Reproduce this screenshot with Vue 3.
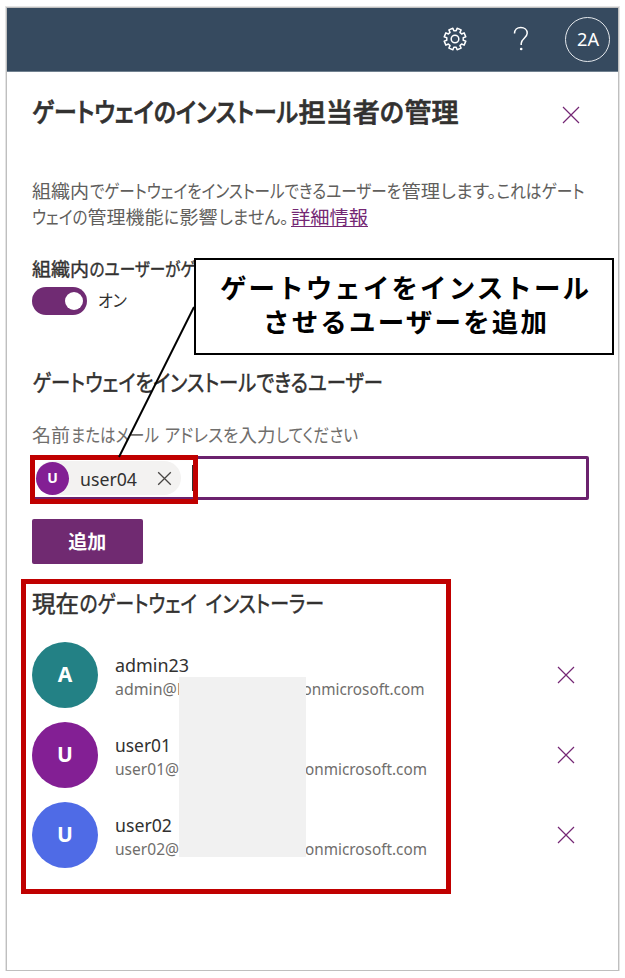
<script setup>
import { h } from 'vue'

// One line of text; each run is [text, x, width] with proportional kana fitted to its width.
const Line = (props) =>
  h('svg', { class: 'line', width: props.w, height: props.h }, props.runs.map(([t, x, w]) =>
    h('text', { x, y: props.y, textLength: w, lengthAdjust: props.fit || 'spacingAndGlyphs' }, t)
  ))
Line.props = ['w', 'h', 'y', 'runs', 'fit']

const title = [['ゲートウェイのインストール', 0, 266], ['担当者', 266.5, 81.5], ['の', 348, 24], ['管理', 372.5, 54]]
const body1 = [['組織内', 0, 57], ['でゲートウェイをインストールできるユーザーを', 58, 311], ['管理', 369.5, 38.5], ['します。', 408.5, 56], ['これはゲート', 464.5, 88]]
const body2 = [['ウェイの', 0, 55.5], ['管理機能', 55.5, 76], ['に', 132, 15], ['影響', 147.5, 38], ['しません。', 186.5, 70]]
const link = [['詳細情報', 0, 77]]
const label = [['組織内', 0, 57], ['のユーザーがゲ', 57.5, 106]]
const usersHeading = [['ゲートウェイをインストールできるユーザー', 0.5, 350.5]]
const hint = [['名前', 0, 38], ['またはメール', 39, 88], ['アドレスを', 132.5, 74], ['入力', 206.5, 37], ['してください', 244, 82]]
const listHeading = [['現在', 0, 47], ['のゲートウェイ', 47.5, 117.5], ['インストーラー', 173.5, 118.5]]

const installers = [
  { initial: 'A', tone: 'teal', name: [['admin23', 0, 74]], mail: [['admin@l', 0, 66], ['onmicrosoft.com', 187.5, 122]] },
  { initial: 'U', tone: 'purple', name: [['user01', 0, 56]], mail: [['user01@', 0, 64], ['onmicrosoft.com', 190, 122]] },
  { initial: 'U', tone: 'blue', name: [['user02', 0, 57]], mail: [['user02@', 0, 64], ['onmicrosoft.com', 190, 122]] }
]

const gear = (() => {
  const pts = []
  for (let i = 0; i < 8; i++) {
    const a = ((i + 0.5) * Math.PI) / 4
    for (const [d, r] of [[-0.25, 8.3], [-0.2, 11], [0.2, 11], [0.25, 8.3]]) {
      pts.push(`${(12 + r * Math.sin(a + d)).toFixed(2)} ${(12 - r * Math.cos(a + d)).toFixed(2)}`)
    }
  }
  return 'M' + pts.join('L') + 'Z'
})()
</script>

<template>
  <div class="frame">
    <header class="bar">
      <svg class="gear" width="24" height="24" viewBox="0 0 24 24">
        <path :d="gear" />
        <circle cx="12" cy="12" r="3.8" />
      </svg>
      <svg class="help" width="16" height="26" viewBox="0 0 16 26">
        <path d="M1.5 7.6C1.5 3.8 4.2 1.6 7.8 1.6S14.2 3.8 14.2 7.2C14.2 11.8 8.2 12.6 8.2 17.4V19" />
        <circle cx="8.2" cy="23" r="1.3" />
      </svg>
      <div class="account"><Line w="22" h="20" y="16.5" :runs="[['2A', 0, 22]]" /></div>
    </header>

    <main class="panel">
      <div class="title-row">
        <Line class="title" w="430" h="34" y="25.5" :runs="title" />
        <svg class="cross close" width="18" height="18" viewBox="0 0 18 18"><path d="M1 1L17 17M17 1L1 17" /></svg>
      </div>

      <div class="description">
        <Line w="552" h="26" y="20" :runs="body1" />
        <div class="body-row">
          <Line w="258.5" h="26" y="20" :runs="body2" />
          <a class="more"><Line w="77" h="22" y="20" :runs="link" /></a>
        </div>
      </div>

      <Line class="label" w="164" h="26" y="20" :runs="label" />
      <div class="toggle-row">
        <span class="toggle"><span class="knob"></span></span>
        <Line class="on" w="32" h="28" y="20" :runs="[['オン', 0, 29]]" />
      </div>

      <Line class="heading users" w="360" h="28" y="21" :runs="usersHeading" />
      <Line class="hint" w="330" h="26" y="20" :runs="hint" />

      <div class="picker">
        <div class="chip">
          <span class="mini">U</span>
          <Line class="chip-name" w="58" h="33" y="24" :runs="[['user04', 0, 57]]" />
          <svg class="cross dark" width="15" height="15" viewBox="0 0 15 15"><path d="M1.2 1.2L13.8 13.8M13.8 1.2L1.2 13.8" /></svg>
        </div>
        <span class="caret"></span>
        <div class="mark mark-input"></div>
      </div>

      <button class="add">追加</button>

      <section class="installers">
        <Line class="heading" w="300" h="28" y="21" :runs="listHeading" />
        <ul class="list">
          <li v-for="(p, i) in installers" :key="i" class="person">
            <span class="avatar" :class="p.tone">{{ p.initial }}</span>
            <div class="who">
              <Line class="name" w="90" h="26" y="20" :runs="p.name" />
              <Line class="mail" w="320" h="22" y="16.5" :runs="p.mail" />
            </div>
            <svg class="cross" width="18" height="18" viewBox="0 0 18 18"><path d="M1 1L17 17M17 1L1 17" /></svg>
          </li>
        </ul>
        <div class="mask"></div>
        <div class="mark mark-list"></div>
      </section>
    </main>

    <svg class="leader" width="80" height="154" viewBox="0 0 80 154"><path d="M77 1L2 151" /></svg>
    <div class="callout">
      <Line w="368" h="34" y="28" fit="spacing" :runs="[['ゲートウェイをインストール', 0, 369]]" />
      <Line w="282" h="34" y="28" fit="spacing" :runs="[['させるユーザーを追加', 0, 284]]" />
    </div>
  </div>
</template>

<style>
body { background: #fff; }
</style>

<style scoped>
.frame {
  position: relative;
  box-sizing: border-box;
  width: 613px;
  height: 964px;
  margin: 7px 0 0 6px;
  border: 1px solid #bfbfbf;
  box-shadow: 0 0 0 1px #e4e4e4;
  color: #323130;
  font-family: "Noto Sans", "Noto Sans CJK JP", sans-serif;
  font-size: 18.67px;
}
.frame :deep(.line), .line { display: block; overflow: visible; flex: none; fill: currentColor; font-feature-settings: "palt"; }
.bar {
  display: flex;
  align-items: center;
  justify-content: flex-end;
  height: 64px;
  padding: 0 8px 1px 0;
  box-sizing: border-box;
  background: #364a5f;
  color: #fff;
  border-bottom: 1px solid #70808f;
}
.gear, .help { fill: none; stroke: #fff; stroke-width: 1.5; stroke-linejoin: round; }
.gear { margin-right: 46px; }
.help { margin-right: 36px; }
.help circle { fill: #fff; stroke: none; }
.account {
  display: flex;
  align-items: center;
  justify-content: center;
  width: 45px;
  height: 45px;
  box-sizing: border-box;
  border: 1px solid #e4e8ec;
  border-radius: 50%;
}
.panel { padding: 24px 0 0 25px; }
.title-row { display: flex; align-items: center; height: 34px; }
.title { font-size: 26.67px; font-weight: 500; stroke: currentColor; stroke-width: 0.7px; }
.cross { display: block; flex: none; fill: none; stroke: #742774; stroke-width: 1.2; }
.cross.close { margin: 4px 0 0 100px; }
.description { margin-top: 48px; color: #605e5c; }
.body-row { display: flex; }
.more { height: 22px; color: #742774; border-bottom: 1px solid #742774; }
.label { margin-top: 26px; stroke: currentColor; stroke-width: 0.4px; }
.toggle-row { display: flex; gap: 11px; margin-top: 5px; height: 28px; }
.toggle { display: flex; align-items: center; justify-content: flex-end; width: 55px; height: 28px; padding-right: 4px; box-sizing: border-box; border-radius: 14px; background: #702b73; }
.knob { width: 18px; height: 18px; border-radius: 50%; background: #fff; }
.on { font-size: 17px; }
.heading { font-size: 23px; stroke: currentColor; stroke-width: 0.5px; }
.users { margin-top: 55px; }
.hint { margin-top: 24px; color: #706e6c; }
.picker {
  position: relative;
  display: flex;
  align-items: center;
  box-sizing: border-box;
  width: 557px;
  height: 44px;
  margin-top: 8px;
  padding-left: 1px;
  border: 3px solid #6b226e;
  border-radius: 2px;
}
.chip { display: flex; align-items: center; width: 145px; height: 34px; border-radius: 17px; background: #f3f2f1; }
.mini { width: 33px; height: 33px; border-radius: 50%; background: #831f94; color: #fff; font-size: 14px; font-weight: 700; line-height: 32px; text-align: center; }
.chip-name { margin-left: 11px; }
.cross.dark { margin-left: 19px; stroke: #484644; stroke-width: 1.3; }
.caret { width: 1px; height: 26px; margin-left: 11px; background: #323130; }
.mark { position: absolute; box-sizing: border-box; border: 5px solid #c00000; }
.mark-input { left: -5px; top: -4px; width: 168px; height: 49px; }
.add {
  display: block;
  width: 110.5px;
  height: 44.5px;
  margin-top: 19px;
  padding: 0 0 2px;
  border: 0;
  border-radius: 2px;
  background: #702a71;
  color: #fff;
  font: 600 19px/41px "Noto Sans CJK JP", sans-serif;
}
.installers { position: relative; margin-top: 27.5px; }
.list { display: flex; flex-direction: column; gap: 14.2px; margin: 23px 0 0; padding: 0; list-style: none; }
.person { display: flex; align-items: center; height: 66px; }
.avatar { width: 66px; height: 66px; border-radius: 50%; color: #fff; font-size: 21px; font-weight: 700; line-height: 64px; text-align: center; }
.teal { background: #238185; }
.purple { background: #831f94; }
.blue { background: #4f6be6; }
.who { width: 425px; margin: 1.5px 16.5px 0 17px; }
.mail { color: #706e6c; font-size: 16px; }
.mask { position: absolute; left: 147px; top: 86px; width: 127px; height: 180px; background: #f1f1f1; }
.mark-list { left: -11px; top: -12px; width: 430px; height: 315px; }
.leader { position: absolute; left: 110px; top: 298px; fill: none; stroke: #000; stroke-width: 2; }
.callout {
  position: absolute;
  left: 187px;
  top: 250px;
  display: flex;
  flex-direction: column;
  align-items: center;
  box-sizing: border-box;
  width: 420px;
  height: 97px;
  padding: 10px 0 0;
  border: 2px solid #000;
  background: #fff;
  color: #000;
  font-size: 26.5px;
  font-weight: 700;
}
.callout :deep(.line) { font-feature-settings: normal; }
</style>
